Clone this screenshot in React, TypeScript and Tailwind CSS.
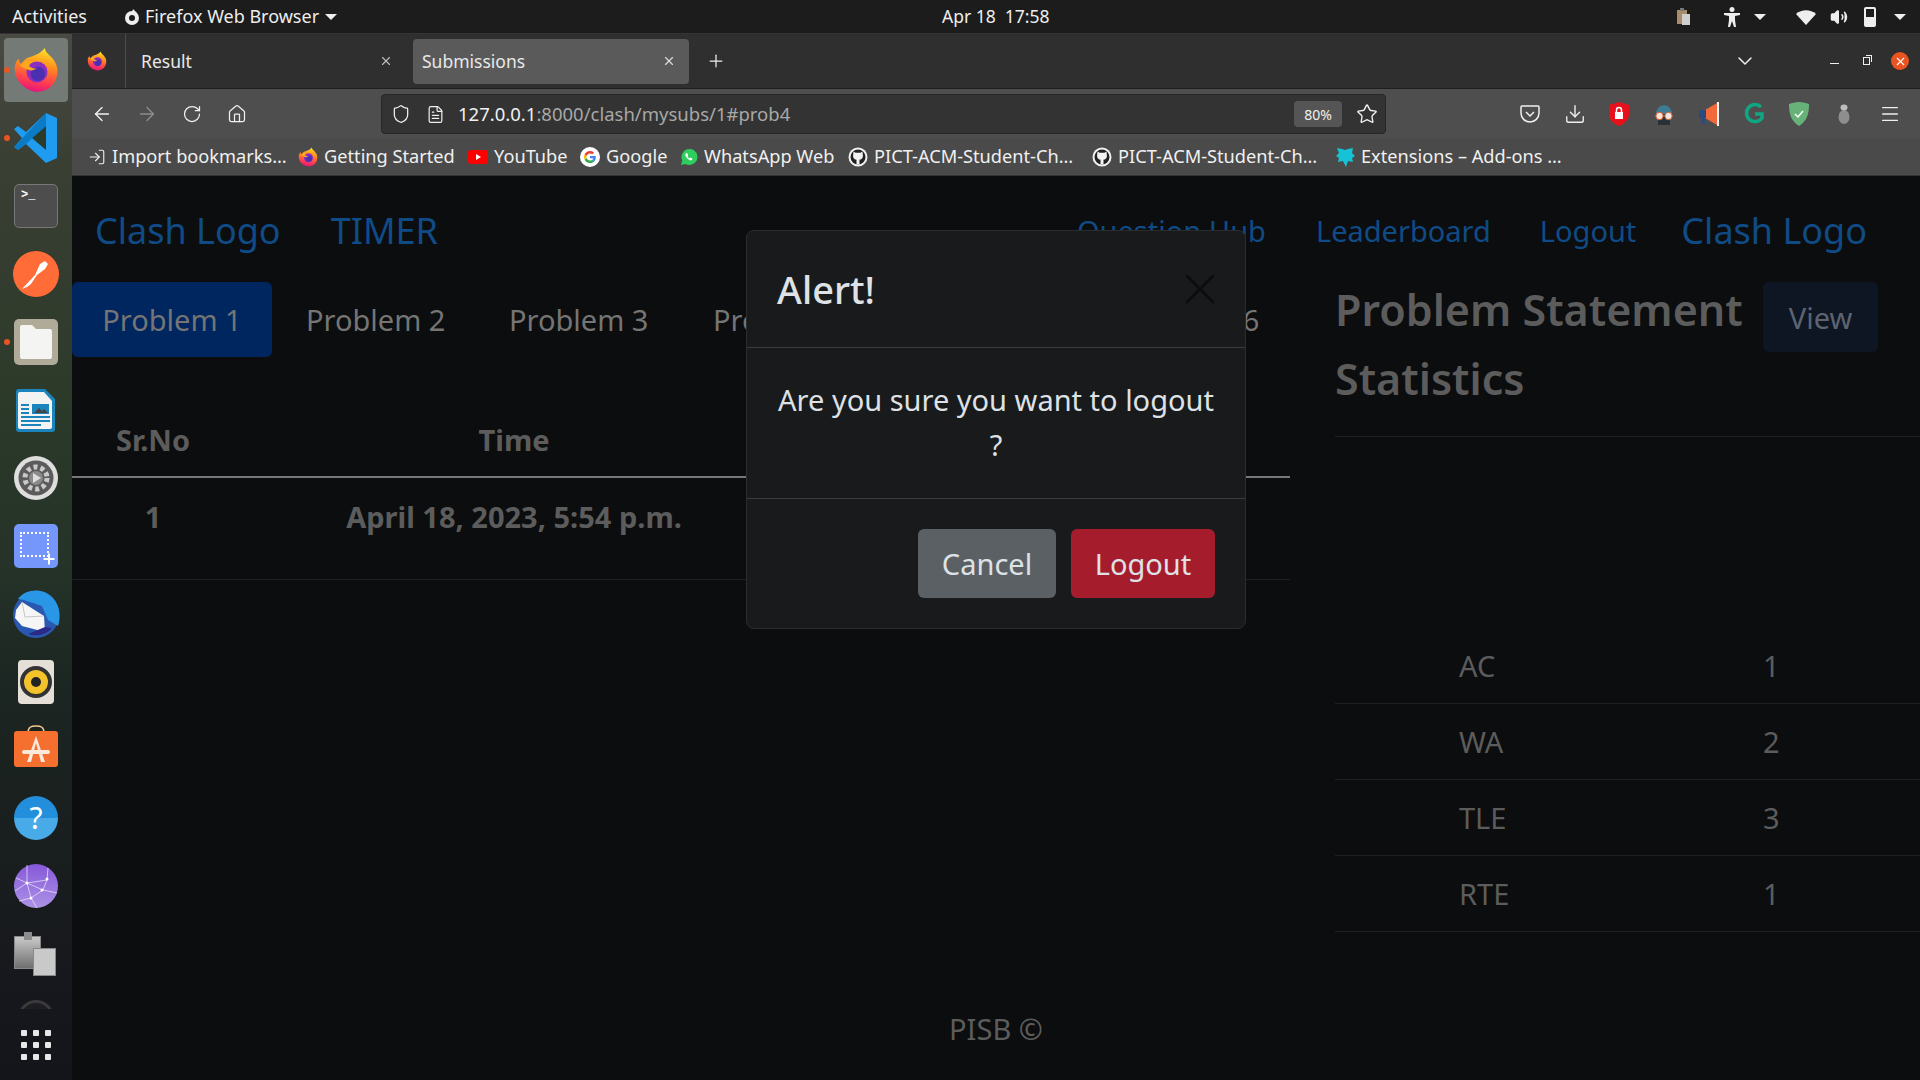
import { ArrowLeft, ArrowRight, ChevronDown, Download, FileText, Home, LogIn, Menu, Plus, RotateCw, Shield, Star, Volume2, X } from "lucide-react";

function FirefoxIcon({ size = 20 }: { size?: number }) {
  return (
    <svg width={size} height={size} viewBox="0 0 48 48">
      <defs>
        <linearGradient id="ff1" x1="0.6" y1="0" x2="0.4" y2="1">
          <stop offset="0" stopColor="#ffe226" />
          <stop offset="0.4" stopColor="#ff8a1e" />
          <stop offset="0.75" stopColor="#ff3d50" />
          <stop offset="1" stopColor="#e3127e" />
        </linearGradient>
      </defs>
      <path d="M33 1c1 6 9 9 12 17 3 8 1 17-5 23-6 6-15 7-22 4C10 42 3 35 2 25 1 20 3 15 6 12c0 3 1 5 3 6 1-3 4-6 7-7 5-2 12-3 17-10z" fill="url(#ff1)" />
      <circle cx="25" cy="26" r="11" fill="#8a2fc0" />
      <circle cx="26" cy="28" r="7.500" fill="#4a2fb0" />
      <path d="M7 19c3-5 10-6 15-4-3 1-5 2-5 5 3 2 6 3 8 2-3 3-8 3-11 1-3-1-5-2-7-4z" fill="#ffa51f" />
    </svg>
  );
}

function GithubIcon() {
  return (
    <svg width="20" height="20" viewBox="0 0 20 20">
      <circle cx="10" cy="10" r="9.500" fill="#f2f2f2" />
      <circle cx="10" cy="10" r="7.500" fill="#222" />
      <path d="M5.500 4.500l2 1.200h5l2-1.200.3 3c.6 2.700-.6 5-3.300 5.300v4.700h-3v-4.700c-2.700-.3-3.900-2.600-3.300-5.300z" fill="#f2f2f2" />
    </svg>
  );
}

function GoogleIcon() {
  return (
    <svg width="20" height="20" viewBox="0 0 20 20">
      <circle cx="10" cy="10" r="10" fill="#fff" />
      <path d="M15.800 10.200c0-.5 0-.9-.1-1.300H10v2.400h3.300c-.2.800-.6 1.400-1.300 1.900l2 1.500c1.200-1.100 1.800-2.700 1.800-4.500z" fill="#4285f4" />
      <path d="M10 16c1.600 0 3-.5 4-1.500l-2-1.500c-.5.400-1.200.6-2 .6-1.600 0-2.900-1-3.400-2.500l-2 1.600C5.600 14.700 7.600 16 10 16z" fill="#34a853" />
      <path d="M6.600 11.100c-.2-.7-.2-1.500 0-2.200l-2-1.600c-.8 1.700-.8 3.700 0 5.400z" fill="#fbbc05" />
      <path d="M10 6.400c.9 0 1.700.3 2.300.9l1.800-1.800C13 4.500 11.600 4 10 4 7.600 4 5.600 5.300 4.600 7.300l2 1.600C7.100 7.400 8.400 6.400 10 6.400z" fill="#ea4335" />
    </svg>
  );
}

function Bookmark({ width, icon, label }: { width: string; icon: React.ReactNode; label: string }) {
  return (
    <div className={`flex shrink-0 items-center gap-[6px] whitespace-nowrap ${width}`}>
      {icon}
      <span>{label}</span>
    </div>
  );
}

function DockSlot({ children, dot }: { children: React.ReactNode; dot?: boolean }) {
  return (
    <div className="relative flex h-[68px] w-[72px] shrink-0 items-center justify-center">
      {dot && <div className="absolute left-[4px] top-[31px] h-[6px] w-[6px] rounded-full bg-[#e95420]" />}
      {children}
    </div>
  );
}

function Dock() {
  return (
    <div className="flex w-[72px] shrink-0 flex-col bg-[linear-gradient(180deg,#4a4a44_0%,#3a3f33_12%,#2c3a2a_35%,#243228_52%,#1c2622_62%,#1a211f_72%,#17181d_90%,#14151a_100%)] pt-[2px]">
      <DockSlot dot>
        <div className="flex h-[64px] w-[64px] items-center justify-center rounded-[4px] bg-[#747a76]">
          <FirefoxIcon size={46} />
        </div>
      </DockSlot>
      <DockSlot dot>
        <svg width="44" height="52" viewBox="0 0 44 52">
          <path d="M32 1l11 5v40l-11 5-20-19-8 6-4-3 8-9-8-9 4-3 8 6z" fill="#1f9cf0" />
          <path d="M32 14v24L18 26z" fill="#2c3a2a" />
          <path d="M32 1v13L12 32l-8 6-4-3z" fill="#0065a9" opacity="0.6" />
        </svg>
      </DockSlot>
      <DockSlot>
        <div className="h-[44px] w-[44px] rounded-[5px] border border-[#777] bg-[#4d4d4d] pl-[6px] pt-[2px] font-['Liberation_Mono',monospace] text-[12px] font-bold leading-[16px] text-white">
          &gt;_
        </div>
      </DockSlot>
      <DockSlot>
        <svg width="46" height="46" viewBox="0 0 46 46">
          <circle cx="23" cy="23" r="23" fill="#ff6c37" />
          <path d="M9 38l13-14 5-11 5-3 3 3-3 5-8 6-6 9-4 3z" fill="#fff" />
        </svg>
      </DockSlot>
      <DockSlot dot>
        <div className="flex h-[46px] w-[44px] items-center justify-center rounded-[5px] bg-[#b0aa99]">
          <svg width="32" height="34" viewBox="0 0 32 34">
            <path d="M2 0h10l4 4h14a2 2 0 012 2v26a2 2 0 01-2 2H2a2 2 0 01-2-2V2a2 2 0 012-2z" fill="#f4f4f2" />
          </svg>
        </div>
      </DockSlot>
      <DockSlot>
        <svg width="46" height="46" viewBox="0 0 46 46">
          <path d="M6 2h26l10 10v30a3 3 0 01-3 3H6a3 3 0 01-3-3V5a3 3 0 013-3z" fill="#1b84bd" />
          <path d="M7 5h24l8 9v26a2 2 0 01-2 2H7a2 2 0 01-2-2V7a2 2 0 012-2z" fill="#f3f3f3" />
          <path d="M8 17h8v2H8zM8 21h8v2H8zM8 25h8v2H8zM8 29h29v2H8zM8 33h29v2H8zM8 37h20v2H8z" fill="#1b84bd" />
          <rect x="19" y="17" width="17" height="10" fill="#1b84bd" />
          <path d="M21 26l5-5 3 3 2-2 4 4z" fill="#444" />
        </svg>
      </DockSlot>
      <DockSlot>
        <svg width="46" height="46" viewBox="0 0 46 46">
          <circle cx="23" cy="23" r="22" fill="#dedede" />
          <circle cx="23" cy="23" r="17.500" fill="#5b5b5b" />
          <circle cx="23" cy="23" r="11" fill="none" stroke="#c9c9c9" strokeWidth="5" strokeDasharray="4 3" />
          <circle cx="23" cy="23" r="7" fill="#8a8a8a" />
          <path d="M20 18l8 5-8 5z" fill="#dedede" />
        </svg>
      </DockSlot>
      <DockSlot>
        <div className="relative h-[44px] w-[44px] rounded-[5px] bg-[#7597fb]">
          <div className="absolute left-[6px] top-[8px] h-[25px] w-[29px] border-[2px] border-dotted border-white" />
          <Plus className="absolute bottom-[1px] right-[1px] h-[16px] w-[16px] text-white" strokeWidth={3} />
        </div>
      </DockSlot>
      <DockSlot>
        <svg width="48" height="48" viewBox="0 0 48 48">
          <circle cx="24" cy="25" r="23" fill="#2a58b0" />
          <path d="M6 9C14-2 32-2 41 8c7 8 8 18 5 28l-10-6-6-14-18-6z" fill="#2a96e6" />
          <path d="M4 20l6-8 22 14 1 16-23-6-7-8z" fill="#f6f6f6" />
          <path d="M10 12l3 15 19-1" fill="none" stroke="#b9b9b9" strokeWidth="0.800" />
          <path d="M16 44c8 3 18 1 24-6l-7-1z" fill="#2a2a86" />
        </svg>
      </DockSlot>
      <DockSlot>
        <div className="flex h-[44px] w-[36px] items-center justify-center rounded-[4px] bg-[#e4e0d7]">
          <div className="flex h-[32px] w-[32px] items-center justify-center rounded-full border-[4px] border-[#333] bg-[#f4c22b]">
            <div className="h-[10px] w-[10px] rounded-full bg-[#222]" />
          </div>
        </div>
      </DockSlot>
      <DockSlot>
        <svg width="44" height="44" viewBox="0 0 44 44" className="-mt-[6px]">
          <path d="M14 8C14 2 17 1 22 1s8 1 8 7" fill="none" stroke="#f1c88f" strokeWidth="1.500" />
          <rect x="0" y="6" width="44" height="36" rx="3" fill="#f5702f" />
          <path d="M22 11l-9 26h4l5-19 5 19h4z" fill="#fde8dc" />
          <rect x="8" y="25" width="28" height="4" rx="2" fill="#fde8dc" />
        </svg>
      </DockSlot>
      <DockSlot>
        <div className="flex h-[44px] w-[44px] items-center justify-center rounded-full bg-[linear-gradient(180deg,#238fdc_50%,#49aae8_50%)] text-[30px] leading-none text-white">
          ?
        </div>
      </DockSlot>
      <DockSlot>
        <svg width="44" height="44" viewBox="0 0 44 44">
          <defs>
            <linearGradient id="gl" x1="0" y1="0" x2="0" y2="1">
              <stop offset="0" stopColor="#8658d9" />
              <stop offset="1" stopColor="#ad92e6" />
            </linearGradient>
          </defs>
          <circle cx="22" cy="22" r="22" fill="url(#gl)" />
          <path d="M2 14l11 5 20-3M1 27l12-8 16 7 14 3M5 37l12-3 12-8 4-10 1-12M13 1l0 18 4 15 6 10" fill="none" stroke="#e6dcf7" strokeWidth="0.800" />
          <circle cx="13" cy="19" r="1.500" fill="#fff" />
          <circle cx="33" cy="15" r="1.500" fill="#fff" />
          <circle cx="28" cy="26" r="1.500" fill="#fff" />
          <circle cx="17" cy="34" r="1.500" fill="#fff" />
        </svg>
      </DockSlot>
      <DockSlot>
        <div className="relative h-[44px] w-[44px]">
          <div className="absolute left-0 top-[4px] h-[33px] w-[27px] border border-[#888] bg-[linear-gradient(180deg,#c9c9c9,#6f6f6f)]" />
          <div className="absolute left-[10px] top-0 h-[8px] w-[8px] bg-[#8c8c8c]" />
          <div className="absolute left-[19px] top-[16px] h-[28px] w-[23px] border border-[#888] bg-[#c9c9c9]" />
        </div>
      </DockSlot>
      <div className="relative h-[21px] w-[72px] shrink-0 overflow-hidden">
        <div className="absolute left-[18px] top-[12px] h-[36px] w-[36px] rounded-full border-[3px] border-[#3a3a3c] bg-[#1e1e22]" />
      </div>
      <div className="grid h-[72px] w-[72px] shrink-0 grid-cols-3 content-center justify-items-center gap-y-[6px] px-[18px]">
        {Array.from({ length: 9 }).map((_, i) => (
          <div key={i} className="h-[6px] w-[6px] rounded-[1px] bg-[#e8e8e8]" />
        ))}
      </div>
    </div>
  );
}

function TopBar() {
  return (
    <div className="flex h-[34px] shrink-0 items-center border-b border-[#333] bg-[#1c1c1c] pl-[12px] pr-[14px] text-[18px] text-[#eee]">
      <div className="flex w-[930px] items-center">
        <span className="w-[111px]">Activities</span>
        <svg width="18" height="18" viewBox="0 0 18 18">
          <circle cx="9" cy="10" r="7" fill="#eee" />
          <circle cx="9" cy="10" r="3" fill="#1c1c1c" />
          <path d="M10 1l4 4-5-1z" fill="#eee" />
        </svg>
        <span className="ml-[4px]">Firefox Web Browser</span>
        <div className="ml-[6px] h-0 w-0 border-x-[6px] border-t-[6px] border-x-transparent border-t-[#eee]" />
      </div>
      <span className="whitespace-pre text-[17.5px]">Apr 18  17:58</span>
      <div className="ml-auto flex items-center">
        <svg width="16" height="18" viewBox="0 0 16 18" className="mr-[32px]">
          <rect x="1" y="2" width="10" height="14" fill="#a98d6b" />
          <rect x="6" y="6" width="8" height="11" fill="#cfcfcf" />
          <rect x="4" y="0" width="4" height="3" fill="#777" />
        </svg>
        <svg width="16" height="20" viewBox="0 0 16 20" className="mr-[14px]">
          <circle cx="8" cy="2.500" r="2.500" fill="#eee" />
          <path d="M0 6h16v2l-5 1v4l1 7h-2l-2-6-2 6H4l1-7V9L0 8z" fill="#eee" />
        </svg>
        <div className="mr-[30px] h-0 w-0 border-x-[6px] border-t-[6px] border-x-transparent border-t-[#eee]" />
        <svg width="20" height="16" viewBox="0 0 20 16" className="mr-[14px]">
          <path d="M10 16L0 5c5.500-5 14.500-5 20 0z" fill="#eee" />
        </svg>
        <Volume2 className="mr-[16px] h-[18px] w-[18px] text-[#eee]" fill="#eee" />
        <div className="mr-[18px] flex h-[20px] w-[12px] items-end rounded-[2px] border-[2px] border-[#eee]">
          <div className="h-[8px] w-full bg-[#eee]" />
        </div>
        <div className="h-0 w-0 border-x-[6px] border-t-[6px] border-x-transparent border-t-[#eee]" />
      </div>
    </div>
  );
}

function BrowserChrome() {
  return (
    <div className="shrink-0">
      {/* tabs */}
      <div className="flex h-[55px] items-center border-b border-[#1f1f1f] bg-[#2f2f2f] text-[17.5px] text-[#e8e8e8]">
        <div className="flex h-full w-[54px] items-center justify-center border-r border-[#4c4c4c] pr-[4px]">
          <FirefoxIcon size={20} />
        </div>
        <div className="flex w-[287px] items-center justify-between pl-[15px] pr-[20px]">
          <span>Result</span>
          <X className="h-[14px] w-[14px] text-[#bbb]" />
        </div>
        <div className="flex h-[45px] w-[276px] items-center justify-between rounded-[4px] bg-[#5a5a5a] pl-[9px] pr-[13px]">
          <span>Submissions</span>
          <X className="h-[14px] w-[14px] text-[#ddd]" />
        </div>
        <Plus className="ml-[17px] h-[20px] w-[20px] text-[#eee]" strokeWidth={1.5} />
        <ChevronDown className="ml-[1007px] h-[24px] w-[24px] text-[#eee]" strokeWidth={1.5} />
        <div className="ml-[73px] mt-[5px] h-[1px] w-[9px] bg-[#eee]" />
        <div className="relative ml-[24px] h-[8px] w-[7px] border border-[#eee]">
          <div className="absolute -right-[3px] -top-[3px] h-[7px] w-[6px] border-r border-t border-[#eee]" />
        </div>
        <div className="ml-[21px] flex h-[18px] w-[18px] items-center justify-center rounded-full bg-[#e95420]">
          <X className="h-[13px] w-[13px] text-white" />
        </div>
      </div>
      {/* toolbar */}
      <div className="flex h-[50px] items-center bg-[#4e4e4e] text-[#f0f0f0]">
        <ArrowLeft className="ml-[19px] h-[22px] w-[22px]" strokeWidth={1.5} />
        <ArrowRight className="ml-[23px] h-[22px] w-[22px] text-[#8d8d8d]" strokeWidth={1.5} />
        <RotateCw className="ml-[24px] h-[20px] w-[20px]" strokeWidth={1.5} />
        <Home className="ml-[25px] h-[20px] w-[20px]" strokeWidth={1.5} />
        <div className="ml-[134px] flex h-[40px] w-[1005px] shrink-0 items-center rounded-[4px] border border-[#262626] bg-[#333] text-[18.5px]">
          <Shield className="ml-[9px] h-[20px] w-[20px]" strokeWidth={1.5} />
          <FileText className="ml-[15px] h-[19px] w-[19px]" strokeWidth={1.5} />
          <span className="ml-[13px]">
            127.0.0.1<span className="text-[#a8a8a8]">:8000/clash/mysubs/1#prob4</span>
          </span>
          <div className="ml-auto flex h-[26px] w-[48px] items-center justify-center rounded-[4px] bg-[#555] text-[14px]">80%</div>
          <Star className="ml-[14px] mr-[7px] h-[22px] w-[22px]" strokeWidth={1.5} />
        </div>
        <svg width="20" height="20" viewBox="0 0 20 20" className="ml-[134px]">
          <path d="M2 2h16a1 1 0 011 1v6a9 9 0 01-18 0V3a1 1 0 011-1z" fill="none" stroke="#f0f0f0" strokeWidth="1.500" />
          <path d="M6 8l4 4 4-4" fill="none" stroke="#f0f0f0" strokeWidth="1.500" />
        </svg>
        <Download className="ml-[24px] h-[22px] w-[22px]" strokeWidth={1.5} />
        <svg width="20" height="24" viewBox="0 0 20 24" className="ml-[23px]">
          <path d="M10 0l10 3v9c0 6-5 10-10 12C5 22 0 18 0 12V3z" fill="#e8101a" />
          <rect x="6" y="10" width="8" height="7" fill="#fff" />
          <path d="M7.500 10V8a2.500 2.500 0 015 0v2" fill="none" stroke="#fff" strokeWidth="1.500" />
        </svg>
        <svg width="20" height="22" viewBox="0 0 20 22" className="ml-[25px]">
          <path d="M2 11a8 9 0 0116 0z" fill="#3d7a94" />
          <rect x="4" y="14" width="12" height="8" fill="#263238" />
          <circle cx="5.500" cy="13" r="3.700" fill="#f0e6da" stroke="#d2552f" />
          <circle cx="14.500" cy="13" r="3.700" fill="#f0e6da" stroke="#d2552f" />
        </svg>
        <svg width="20" height="24" viewBox="0 0 20 24" className="ml-[25px]">
          <path d="M6 8l12-7v22L6 16z" fill="#f26a3a" />
          <rect x="0" y="8" width="7" height="8" fill="#2b4a7c" />
          <rect x="3" y="16" width="3" height="6" fill="#2b4a7c" />
          <rect x="18" y="0" width="2" height="24" fill="#f4f4f4" />
        </svg>
        <svg width="20" height="24" viewBox="0 0 20 24" className="ml-[25px]">
          <path d="M17 5A8.500 8.500 0 1018 16V12h-7" fill="none" stroke="#11a683" strokeWidth="3.500" />
        </svg>
        <svg width="20" height="24" viewBox="0 0 20 24" className="ml-[25px]">
          <path d="M10 0c4 0 7 1 10 2 0 10-2 17-10 22C2 19 0 12 0 2c3-1 6-2 10-2z" fill="#67b279" />
          <path d="M6 12l3 3 5-6" fill="none" stroke="#fff" strokeWidth="1.500" />
        </svg>
        <svg width="12" height="20" viewBox="0 0 12 20" className="ml-[29px]">
          <ellipse cx="6" cy="13" rx="5.500" ry="7" fill="#8e8e8e" />
          <ellipse cx="6" cy="3.500" rx="3.500" ry="3" fill="#bdbdbd" />
        </svg>
        <Menu className="ml-[29px] h-[22px] w-[22px]" strokeWidth={1.5} />
      </div>
      {/* bookmarks */}
      <div className="flex h-[37px] items-center border-b border-[#333] bg-[#4a4a4a] pl-[16px] text-[18.200px] text-[#f0f0f0]">
        <Bookmark width="w-[210px]" icon={<LogIn className="h-[18px] w-[18px]" strokeWidth={1.5} />} label="Import bookmarks…" />
        <Bookmark width="w-[170px]" icon={<FirefoxIcon size={20} />} label="Getting Started" />
        <Bookmark width="w-[112px]" icon={<div className="flex h-[14px] w-[20px] items-center justify-center rounded-[3px] bg-[#f00]"><div className="h-0 w-0 border-y-[3px] border-l-[5px] border-y-transparent border-l-white" /></div>} label="YouTube" />
        <Bookmark width="w-[100px]" icon={<GoogleIcon />} label="Google" />
        <Bookmark width="w-[168px]" icon={<svg width="18" height="18" viewBox="0 0 18 18"><path d="M1 17l1.300-4.500A8 8 0 119 17a8 8 0 01-3.800-1z" fill="#2fcc5e" /><path d="M6 5c-1 1-1 3 1 5s4 3 5 2l.5-1.500-2-1-1 .8c-1-.5-1.500-1-2-2l.7-1-1-2z" fill="#fff" /></svg>} label="WhatsApp Web" />
        <Bookmark width="w-[244px]" icon={<GithubIcon />} label="PICT-ACM-Student-Ch…" />
        <Bookmark width="w-[243px]" icon={<GithubIcon />} label="PICT-ACM-Student-Ch…" />
        <Bookmark width="w-[230px]" icon={<svg width="20" height="22" viewBox="0 0 20 22"><path d="M2 2l5 1 3 1 3-1 5-1-1 5 3 3-3 2 1 4-5-1-2 6-3-6-5 1 1-4-3-2 3-3z" fill="#15c2d6" /></svg>} label="Extensions – Add-ons …" />
      </div>
    </div>
  );
}

function StatRow({ name, value }: { name: string; value: string }) {
  return (
    <div className="flex h-[76px] items-center border-b border-[#1f2022] pl-[124px]">
      <span className="w-[304px]">{name}</span>
      <span>{value}</span>
    </div>
  );
}

function Page() {
  return (
    <div className="relative flex min-h-0 flex-1 flex-col overflow-hidden bg-[#0c0d0e] text-[#5c5c5c]">
      {/* navbar */}
      <div className="flex h-[106px] shrink-0 items-center pl-[23px] pr-[53px] pt-[3px] text-[#0f4b87]">
        <span className="text-[36px]">Clash Logo</span>
        <span className="ml-[50px] text-[36px]">TIMER</span>
        <div className="ml-auto flex items-center text-[29px]">
          <span>Question Hub</span>
          <span className="ml-[50px]">Leaderboard</span>
          <span className="ml-[49px]">Logout</span>
          <span className="ml-[45px] text-[36px]">Clash Logo</span>
        </div>
      </div>
      <div className="flex flex-1">
        {/* left column */}
        <div className="w-[1218px] shrink-0">
          <div className="flex h-[75px] items-center whitespace-nowrap text-[29px] text-[#757575]">
            <div className="flex h-full w-[200px] shrink-0 items-center justify-center rounded-[6px] bg-[#00265f]">Problem 1</div>
            <span className="ml-[34px] w-[203px] shrink-0">Problem 2</span>
            <span className="w-[204px] shrink-0">Problem 3</span>
            <span className="w-[203px] shrink-0">Problem 4</span>
            <span className="w-[204px] shrink-0">Problem 5</span>
            <span className="shrink-0">Problem 6</span>
          </div>
          <div className="mt-[46px] flex h-[75px] items-center border-b-2 border-[#777] text-[29px] font-bold">
            <span className="w-[162px] text-center">Sr.No</span>
            <span className="w-[560px] text-center">Time</span>
          </div>
          <div className="flex h-[102px] items-center border-b border-[#1f2022] pb-[23px] text-[29px] font-bold">
            <span className="w-[162px] text-center">1</span>
            <span className="w-[560px] text-center">April 18, 2023, 5:54 p.m.</span>
          </div>
        </div>
        {/* right column */}
        <div className="ml-[45px] flex-1">
          <div className="flex h-[155px] items-start border-b border-[#1f2022] text-[43px] font-semibold leading-[69px]">
            <div className="-mt-[7px] w-[428px] whitespace-nowrap">
              Problem Statement
              <br />
              Statistics
            </div>
            <div className="flex h-[70px] w-[115px] items-center justify-center rounded-[6px] bg-[#0e1624] text-[29px] font-normal text-[#5c6470]">View</div>
          </div>
          <div className="mt-[191px] text-[29px]">
            <StatRow name="AC" value="1" />
            <StatRow name="WA" value="2" />
            <StatRow name="TLE" value="3" />
            <StatRow name="RTE" value="1" />
          </div>
        </div>
      </div>
      <div className="flex h-[102px] shrink-0 items-center justify-center text-[29px]">PISB ©</div>
      {/* logout modal */}
      <div className="absolute inset-0 flex justify-center pt-[54px]">
        <div className="h-[399px] w-[500px] rounded-[8px] border border-[#2b2c2e] bg-[#191a1c] text-[#dee2e6]">
          <div className="flex h-[117px] items-center justify-between border-b border-[#3a3b3d] px-[30px]">
            <span className="text-[38px] font-medium leading-[56px]">Alert!</span>
            <svg width="30" height="30" viewBox="0 0 30 30">
              <path d="M2 2l26 26M28 2L2 28" fill="none" stroke="#0c0d0e" strokeWidth="3" strokeLinecap="round" />
            </svg>
          </div>
          <div className="h-[151px] border-b border-[#3a3b3d] px-[30px] pt-[29px] text-center text-[29px] leading-[45px]">
            Are you sure you want to logout ?
          </div>
          <div className="flex justify-end gap-[15px] pr-[30px] pt-[30px] text-[29px]">
            <div className="flex h-[69px] w-[138px] items-center justify-center rounded-[6px] bg-[#5a6064]">Cancel</div>
            <div className="flex h-[69px] w-[144px] items-center justify-center rounded-[6px] bg-[#a51d2d]">Logout</div>
          </div>
        </div>
      </div>
    </div>
  );
}

export default function App() {
  return (
    <div className="flex h-screen w-full flex-col overflow-hidden font-['Noto_Sans',sans-serif]">
      <TopBar />
      <div className="flex min-h-0 flex-1">
        <Dock />
        <div className="flex min-w-0 flex-1 flex-col">
          <BrowserChrome />
          <Page />
        </div>
      </div>
    </div>
  );
}
